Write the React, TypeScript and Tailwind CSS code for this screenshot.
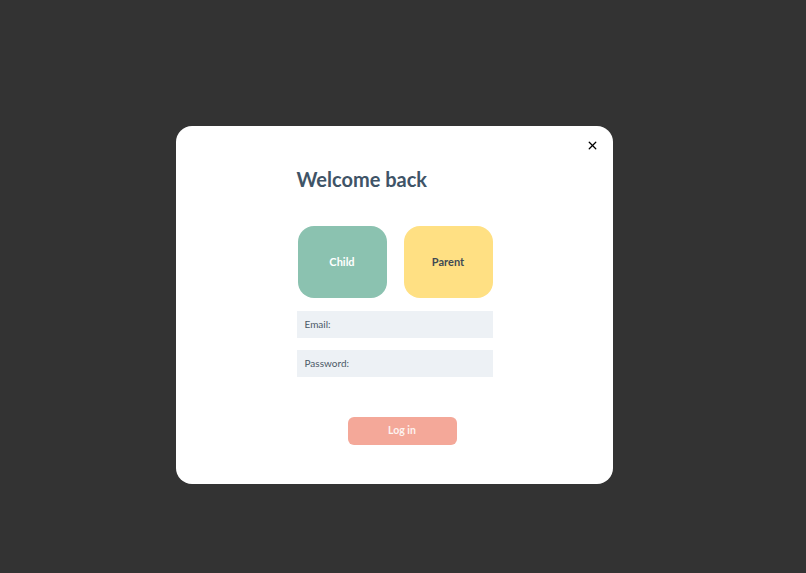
import { X } from 'lucide-react';

export default function App() {
  return (
    <div
      className="min-h-[573px] w-full bg-[#333333] pt-[126px] pl-[176px]"
      style={{ fontFamily: 'Lato, "Noto Sans", sans-serif' }}
    >
      <div className="relative w-[437px] h-[358px] rounded-[16px] bg-white">
        {/* Close */}
        <button type="button" className="absolute right-[14px] top-[13px] text-black">
          <X size={13} strokeWidth={2.4} />
        </button>

        <div className="mx-auto w-[196px] pt-[39px] flex flex-col">
          <h1 className="text-[20px] leading-[28px] font-bold text-[#3f5467]">Welcome back</h1>

          {/* Role picker */}
          <div className="mt-[33px] flex justify-between pl-px">
            <button
              type="button"
              className="w-[89px] h-[72px] rounded-[16px] bg-[#8bc2b0] text-white text-[11px] font-bold flex items-center justify-center"
            >
              Child
            </button>
            <button
              type="button"
              className="w-[89px] h-[72px] rounded-[16px] bg-[#ffe083] text-[#3f4a54] text-[11px] font-bold flex items-center justify-center"
            >
              Parent
            </button>
          </div>

          <div className="mt-[13px] h-[27px] bg-[#edf1f5] px-[8px] flex items-center text-[10px] text-[#4b5866]">
            Email:
          </div>
          <div className="mt-[12px] h-[27px] bg-[#edf1f5] px-[8px] flex items-center text-[10px] text-[#4b5866]">
            Password:
          </div>

          <button
            type="button"
            className="mt-[40px] ml-[51px] w-[109px] h-[28px] rounded-[6px] bg-[#f4a899] text-[#fdf3f0] text-[10.5px] font-bold flex items-center justify-center"
          >
            Log in
          </button>
        </div>
      </div>
    </div>
  );
}
